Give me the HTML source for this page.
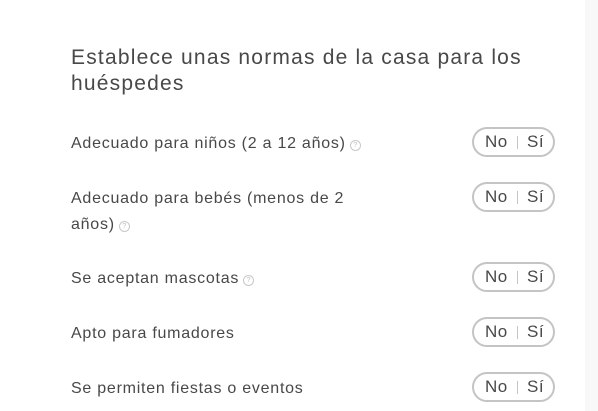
<!DOCTYPE html>
<html><head><style>
body{margin:0;width:598px;height:411px;background:#fff;font-family:"Liberation Sans",sans-serif;color:#484848;position:relative;overflow:hidden}
.strip{position:absolute;left:585px;top:0;width:13px;height:411px;background:#f8f8f8}
h1{position:absolute;left:71px;top:45px;margin:0;font-weight:normal;font-size:21px;line-height:26px;width:500px;letter-spacing:1.2px}
.lab{position:absolute;left:71px;font-size:16px;line-height:26px;width:300px;letter-spacing:0.75px}
.q{display:inline-block;width:9px;height:9px;border:1px solid #c8c8c8;border-radius:50%;font-size:7px;line-height:9px;text-align:center;color:#c0c0c0;vertical-align:1px;margin-left:4px;letter-spacing:0}
.tg{position:absolute;left:472px;width:79px;height:26px;border:2px solid #c4c4c4;border-radius:15px;font-size:17px;line-height:26px;color:#484848;letter-spacing:0.5px}
.tg .n{position:absolute;left:11px}
.tg .s{position:absolute;left:53px}
.tg .b{position:absolute;left:43px;top:7px;width:1px;height:13px;background:#c4c4c4}
</style></head><body>
<div class="strip"></div>
<h1>Establece unas normas de la casa para los huéspedes</h1>
<div class="lab" style="top:131px;width:400px">Adecuado para niños (2 a 12 años)<span class="q">?</span></div>
<div class="tg" style="top:127px"><span class="n">No</span><span class="b"></span><span class="s">Sí</span></div>
<div class="lab" style="top:186px;width:295px">Adecuado para bebés (menos de 2 años)<span class="q">?</span></div>
<div class="tg" style="top:182px"><span class="n">No</span><span class="b"></span><span class="s">Sí</span></div>
<div class="lab" style="top:266px">Se aceptan mascotas<span class="q">?</span></div>
<div class="tg" style="top:262px"><span class="n">No</span><span class="b"></span><span class="s">Sí</span></div>
<div class="lab" style="top:321px">Apto para fumadores</div>
<div class="tg" style="top:317px"><span class="n">No</span><span class="b"></span><span class="s">Sí</span></div>
<div class="lab" style="top:376px">Se permiten fiestas o eventos</div>
<div class="tg" style="top:372px"><span class="n">No</span><span class="b"></span><span class="s">Sí</span></div>
</body></html>
